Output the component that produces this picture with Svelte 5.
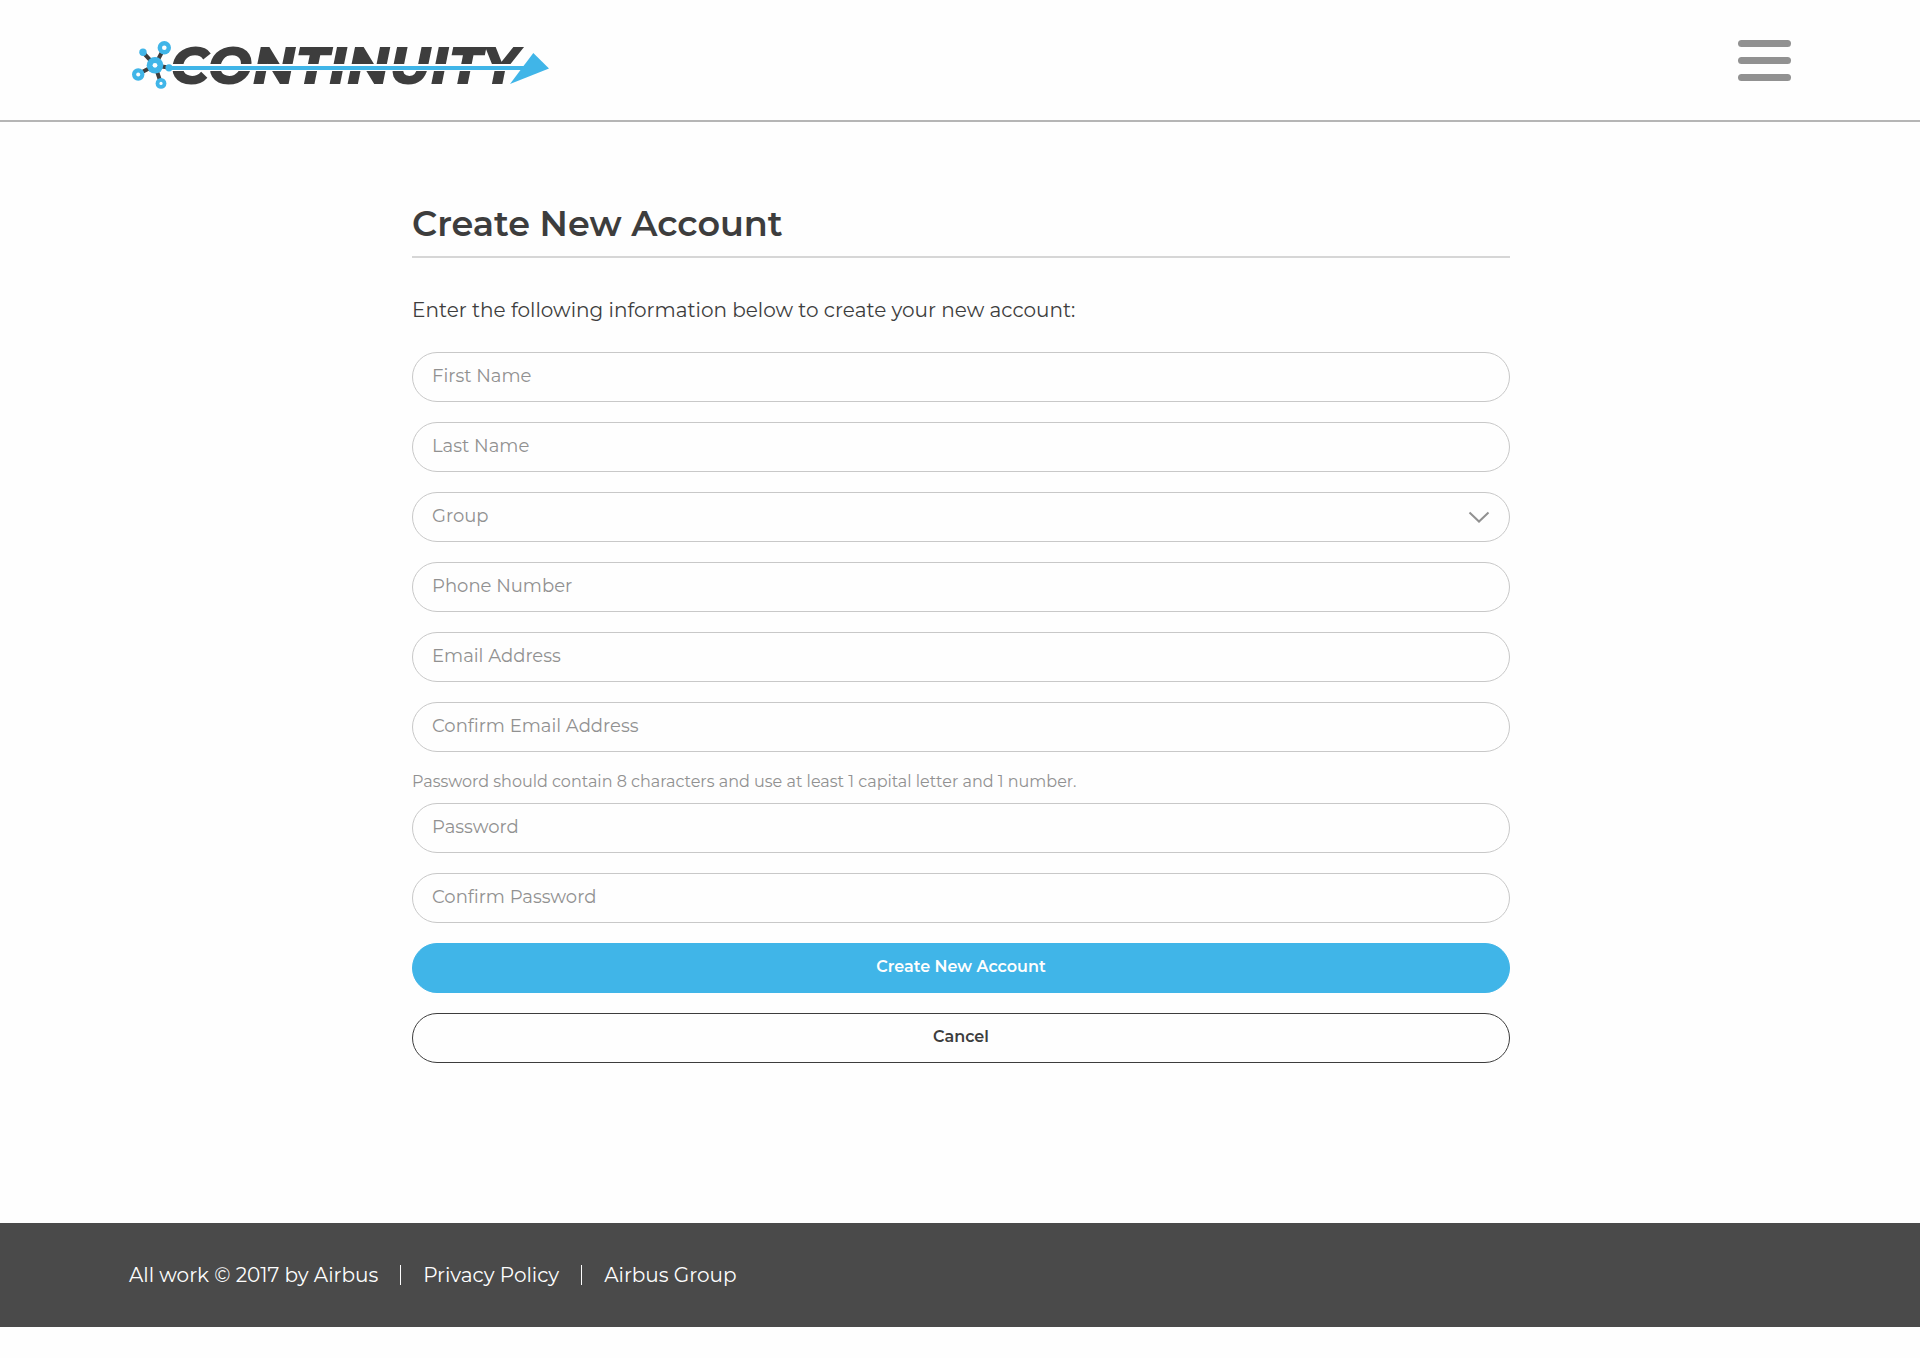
<script lang="ts">
	interface Field {
		name: string;
		label: string;
		type: string;
	}

	const nameFields: Field[] = [
		{ name: 'firstName', label: 'First Name', type: 'text' },
		{ name: 'lastName', label: 'Last Name', type: 'text' }
	];

	const contactFields: Field[] = [
		{ name: 'phone', label: 'Phone Number', type: 'tel' },
		{ name: 'email', label: 'Email Address', type: 'email' },
		{ name: 'confirmEmail', label: 'Confirm Email Address', type: 'email' }
	];

	const passwordFields: Field[] = [
		{ name: 'password', label: 'Password', type: 'password' },
		{ name: 'confirmPassword', label: 'Confirm Password', type: 'password' }
	];

	let values: Record<string, string> = $state({});
	let group = $state('');

	function reset() {
		values = {};
		group = '';
	}
</script>

{#snippet field({ name, label, type }: Field)}
	<input
		class="control"
		{name}
		{type}
		aria-label={label}
		placeholder={label}
		value={values[name] ?? ''}
		oninput={(e) => (values[name] = e.currentTarget.value)}
	/>
{/snippet}

<header class="site-header">
	<a class="logo" href="#home" aria-label="Continuity">
		<svg width="418" height="50" viewBox="0 0 418 50">
			<text class="wordmark" x="38" y="44">CONTINUITY</text>
			<rect x="38" y="24" width="352" height="7" fill="#fefefe" />
			<path
				d="M23 25.3 32.3 7.7M23 25.3 11 12.3M23 25.3 6 34.3M23 25.3 29 43.3M23 25.3 37 27.7"
				stroke="#3d3d3d"
				stroke-width="4"
			/>
			<g fill="#40b5e8">
				<circle cx="23" cy="25.3" r="8.3" />
				<circle cx="32.3" cy="7.8" r="6.7" />
				<circle cx="11" cy="12.3" r="3.7" />
				<circle cx="6.2" cy="34.5" r="6.2" />
				<circle cx="29" cy="43.4" r="5.4" />
				<circle cx="37" cy="27.8" r="3.6" />
				<rect x="37" y="26" width="358" height="4" />
				<path d="M401.3 13 417 28.4 378 44Z" />
			</g>
			<g fill="#fefefe">
				<circle cx="23" cy="25.3" r="2.4" />
				<circle cx="32.3" cy="7.8" r="2.3" />
				<circle cx="6.2" cy="34.5" r="2" />
				<circle cx="29" cy="43.4" r="1.6" />
			</g>
		</svg>
	</a>
	<button class="menu" type="button" aria-label="Menu">
		<span></span>
		<span></span>
		<span></span>
	</button>
</header>

<main>
	<h1>Create New Account</h1>
	<p class="intro">Enter the following information below to create your new account:</p>

	<form onsubmit={(e) => e.preventDefault()}>
		{#each nameFields as item (item.name)}
			{@render field(item)}
		{/each}

		<div class="select">
			<select class="control" name="group" aria-label="Group" bind:value={group}>
				<option value="">Group</option>
			</select>
			<svg width="22" height="14" viewBox="0 0 22 14" aria-hidden="true">
				<path d="M1.5 2.5 11 11.500 20.500 2.500" fill="none" stroke="#919191" stroke-width="2" />
			</svg>
		</div>

		{#each contactFields as item (item.name)}
			{@render field(item)}
		{/each}

		<div class="passwords">
			<p class="hint">
				Password should contain 8 characters and use at least 1 capital letter and 1 number.
			</p>
			{#each passwordFields as item (item.name)}
				{@render field(item)}
			{/each}
		</div>

		<button class="button primary" type="submit">Create New Account</button>
		<button class="button" type="button" onclick={reset}>Cancel</button>
	</form>
</main>

<footer>
	<span>All work © 2017 by Airbus</span>
	<a href="#privacy">Privacy Policy</a>
	<a href="#airbus">Airbus Group</a>
</footer>

<style>
	:global(body) {
		background: #fefefe;
		color: #3d3d3d;
		font-family: Montserrat, Inter, sans-serif;
	}

	.site-header {
		display: flex;
		align-items: flex-start;
		justify-content: space-between;
		padding: 40px 129px 30px 132px;
		border-bottom: 2px solid #b5b5b5;
	}

	.logo svg {
		display: block;
		overflow: visible;
	}

	.wordmark {
		font-size: 53px;
		font-weight: 800;
		font-style: italic;
		fill: #3d3d3d;
	}

	.menu {
		display: flex;
		flex-direction: column;
		gap: 10px;
		width: 53px;
		padding: 0;
		border: 0;
		background: none;
		cursor: pointer;
	}

	.menu span {
		height: 7px;
		border-radius: 4px;
		background: #919191;
	}

	main {
		max-width: 1098px;
		margin: 0 auto;
		padding: 80px 20px 160px 22px;
	}

	h1 {
		margin: 0;
		padding-bottom: 10px;
		border-bottom: 2px solid #d6d6d6;
		font-size: 35px;
		font-weight: 600;
		line-height: 44px;
	}

	.intro {
		margin: 40px 0 30px;
		font-size: 20px;
		line-height: 24px;
	}

	form,
	.passwords {
		display: flex;
		flex-direction: column;
		gap: 20px;
	}

	.control {
		display: block;
		box-sizing: border-box;
		width: 100%;
		height: 50px;
		padding: 0 19px 2px;
		border: 1px solid #c8c8c8;
		border-radius: 25px;
		background: none;
		color: #919191;
		font: inherit;
		font-size: 18px;
		appearance: none;
	}

	.control::placeholder {
		color: #919191;
		opacity: 1;
	}

	.select {
		position: relative;
	}

	.select svg {
		position: absolute;
		top: 18px;
		right: 20px;
		pointer-events: none;
	}

	.hint {
		margin: 0 0 -9px;
		color: #919191;
		font-size: 16px;
		line-height: 20px;
	}

	.button {
		height: 50px;
		padding: 0 20px 3px;
		border: 1px solid #3d3d3d;
		border-radius: 25px;
		background: none;
		color: #3d3d3d;
		font: inherit;
		font-size: 16px;
		font-weight: 600;
		cursor: pointer;
	}

	.primary {
		border-color: #40b5e8;
		background: #40b5e8;
		color: #fefefe;
	}

	footer {
		display: flex;
		align-items: center;
		margin-bottom: 31px;
		padding: 42px 129px;
		background: #4a4a4a;
		color: #fefefe;
		font-size: 20px;
		line-height: 20px;
	}

	footer a {
		margin-left: 22px;
		padding-left: 22px;
		border-left: 1px solid #fefefe;
		color: inherit;
		text-decoration: none;
	}
</style>
